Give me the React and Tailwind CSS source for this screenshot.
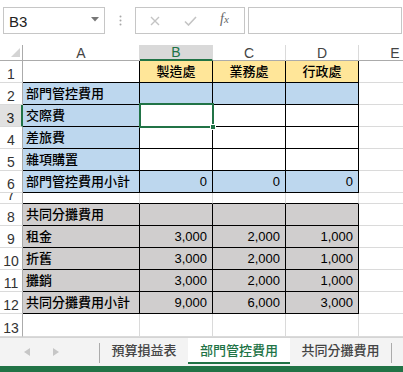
import React from 'react';

const COLS = ['w-[117px]', 'w-[73px]', 'w-[73px]', 'w-[73px]', 'w-[73px]'];

function Cell({ w, bg = 'bg-white', r = 'g', b = 'g', align = 'left', children, sel }) {
  const cls = [
    'relative shrink-0 flex items-center border-r border-b text-[13px] text-black',
    sel ? 'z-10' : '',
    w,
    bg,
    r === 'k' ? 'border-r-black' : 'border-r-[#dadada]',
    b === 'k' ? 'border-b-black' : 'border-b-[#dadada]',
    align === 'right' ? 'justify-end pr-[5px]' : align === 'center' ? 'justify-center' : 'pl-[3px]',
  ].join(' ');
  return (
    <div className={cls}>
      <span className="whitespace-nowrap leading-none font-medium">{children}</span>
      {sel && (
        <>
          <div className="absolute left-[-1px] top-[-2px] right-[-2px] bottom-[-2px] border-2 border-[#217346] pointer-events-none z-10" />
          <div className="absolute right-[-4px] bottom-[-4px] w-[6px] h-[6px] bg-[#217346] border border-white z-20" />
        </>
      )}
    </div>
  );
}

function RowHead({ num, sel }) {
  return (
    <div
      className={[
        'w-[23px] shrink-0 flex justify-center items-end overflow-hidden border-b border-b-[#dadada] text-[14px]',
        sel ? 'bg-[#e1e1e1] border-r-2 border-r-[#217346] text-[#222]' : 'bg-white border-r border-r-[#ababab] text-[#333]',
      ].join(' ')}
    >
      <span className="leading-[13px] pb-[1px]">{num}</span>
    </div>
  );
}

function Row({ num, h, cells, sel }) {
  return (
    <div className={`flex shrink-0 ${h} ${sel ? 'relative z-10' : ''}`}>
      <RowHead num={num} sel={sel} />
      {cells.map((c, i) => (
        <Cell key={i} w={COLS[i]} {...c} />
      ))}
      <div className="w-[40px] shrink-0 border-r border-b border-[#dadada]" />
    </div>
  );
}

const BLUE = 'bg-[#bdd7ee]';
const YEL = 'bg-[#ffe699]';
const GRY = 'bg-[#d0cece]';
const E = { r: 'g', b: 'g' };
const EB = { r: 'g', b: 'k' };

function blueRow(label, vals, fillBlue) {
  return [
    { bg: BLUE, r: 'k', b: 'k', children: label },
    ...vals.map((v) => ({ bg: fillBlue ? BLUE : 'bg-white', r: 'k', b: 'k', align: 'right', children: v })),
    E,
  ];
}

function grayRow(label, vals) {
  return [
    { bg: GRY, r: 'k', b: 'k', children: label },
    ...vals.map((v) => ({ bg: GRY, r: 'k', b: 'k', align: 'right', children: v })),
    E,
  ];
}

function ColHead({ w, label, sel }) {
  return (
    <div
      className={[
        'shrink-0 flex items-center justify-center text-[14px] border-r border-r-[#dadada]',
        w,
        sel ? 'bg-[#d9d9d9] text-[#217346] border-b-2 border-b-[#217346]' : 'bg-white text-[#444] border-b border-b-[#ababab]',
      ].join(' ')}
    >
      <span className="leading-none">{label}</span>
    </div>
  );
}

function FormulaBar() {
  return (
    <div className="h-[45px] shrink-0 flex items-start pt-[7px] pl-[3px] bg-white">
      <div className="w-[102px] h-[27px] border border-[#c6c6c6] flex items-center justify-between pl-[5px] pr-[5px]">
        <span className="text-[15px] text-[#222] leading-none pt-[2px]">B3</span>
        <svg width="8" height="5" viewBox="0 0 8 5" className="mb-[2px]">
          <polygon points="0,0 8,0 4,4.5" fill="#777" />
        </svg>
      </div>
      <div className="w-[30px] h-[27px] flex items-center justify-center">
        <svg width="3" height="11" viewBox="0 0 3 11">
          <circle cx="1.5" cy="1.5" r="1" fill="#a8a8a8" />
          <circle cx="1.5" cy="5.5" r="1" fill="#a8a8a8" />
          <circle cx="1.5" cy="9.5" r="1" fill="#a8a8a8" />
        </svg>
      </div>
      <div className="w-[110px] h-[27px] border border-[#c6c6c6] flex items-center relative">
        <svg width="10" height="10" viewBox="0 0 10 10" className="absolute left-[14px] top-[8px]">
          <path d="M1 1 L9 9 M9 1 L1 9" stroke="#c4c4c4" strokeWidth="1.4" fill="none" />
        </svg>
        <svg width="13" height="10" viewBox="0 0 13 10" className="absolute left-[48px] top-[8px]">
          <path d="M1 5.5 L4.5 9 L12 1" stroke="#c4c4c4" strokeWidth="1.6" fill="none" />
        </svg>
        <span className="absolute left-[84px] top-[4px] font-['Liberation_Serif',serif] italic text-[#666] text-[14px] leading-none">
          f<span className="text-[11px]">x</span>
        </span>
      </div>
      <div className="ml-[3px] w-[154px] h-[27px] border border-[#c6c6c6]" />
    </div>
  );
}

function TabStrip() {
  return (
    <div className="h-[29px] shrink-0 flex items-start bg-[#f3f3f3] border-t border-t-[#d4d4d4] text-[13px]">
      <div className="w-[99px] h-[26px] flex items-center shrink-0">
        <svg width="6" height="8" viewBox="0 0 6 8" className="ml-[24px] mt-[2px]">
          <polygon points="6,0 6,8 0,4" fill="#c6c6c6" />
        </svg>
        <svg width="6" height="8" viewBox="0 0 6 8" className="ml-[23px] mt-[2px]">
          <polygon points="0,0 0,8 6,4" fill="#c6c6c6" />
        </svg>
      </div>
      <div className="w-px h-[20px] mt-[5px] bg-[#ababab] shrink-0" />
      <div className="w-[88px] h-[26px] flex items-center justify-center text-[#444] shrink-0 font-medium">預算損益表</div>
      <div className="w-[102px] h-[26px] flex items-center justify-center bg-white text-[#217346] border-b-2 border-b-[#217346] shrink-0 pt-[2px] font-medium">
        部門管控費用
      </div>
      <div className="w-[101px] h-[26px] flex items-center justify-center text-[#444] shrink-0 font-medium">共同分攤費用</div>
      <div className="w-px h-[20px] mt-[5px] bg-[#ababab] shrink-0" />
    </div>
  );
}

export default function App() {
  return (
    <div className="w-[403px] h-[372px] overflow-hidden bg-white flex flex-col font-['Liberation_Sans','Noto_Sans_CJK_TC',sans-serif]">
      <FormulaBar />
      <div className="flex flex-col shrink-0 h-[292px] overflow-hidden">
        <div className="flex shrink-0 h-[16px]">
          <div className="w-[23px] shrink-0 bg-white border-r border-b border-[#ababab] flex items-end justify-end pr-[2px] pb-[3px]">
            <svg width="9" height="9" viewBox="0 0 9 9">
              <polygon points="9,0 9,9 0,9" fill="#d4d4d4" />
            </svg>
          </div>
          <ColHead w={COLS[0]} label="A" />
          <ColHead w={COLS[1]} label="B" sel />
          <ColHead w={COLS[2]} label="C" />
          <ColHead w={COLS[3]} label="D" />
          <ColHead w={COLS[4]} label="E" />
          <div className="w-[40px] shrink-0 border-b border-b-[#ababab]" />
        </div>
        <Row
          num="1"
          h="h-[22px]"
          cells={[
            { r: 'k', b: 'k' },
            { bg: YEL, r: 'k', b: 'k', align: 'center', children: '製造處' },
            { bg: YEL, r: 'k', b: 'k', align: 'center', children: '業務處' },
            { bg: YEL, r: 'k', b: 'k', align: 'center', children: '行政處' },
            E,
          ]}
        />
        <Row num="2" h="h-[22px]" cells={blueRow('部門管控費用', ['', '', ''], true)} />
        <Row
          num="3"
          h="h-[22px]"
          sel
          cells={[
            { bg: BLUE, r: 'k', b: 'k', children: '交際費' },
            { r: 'k', b: 'k', sel: true },
            { r: 'k', b: 'k' },
            { r: 'k', b: 'k' },
            E,
          ]}
        />
        <Row num="4" h="h-[22px]" cells={blueRow('差旅費', ['', '', ''], false)} />
        <Row num="5" h="h-[22px]" cells={blueRow('雜項購置', ['', '', ''], false)} />
        <Row num="6" h="h-[22px]" cells={blueRow('部門管控費用小計', ['0', '0', '0'], true)} />
        <Row num="7" h="h-[11px]" cells={[EB, EB, EB, EB, E]} />
        <Row num="8" h="h-[22px]" cells={grayRow('共同分攤費用', ['', '', ''])} />
        <Row num="9" h="h-[22px]" cells={grayRow('租金', ['3,000', '2,000', '1,000'])} />
        <Row num="10" h="h-[22px]" cells={grayRow('折舊', ['3,000', '2,000', '1,000'])} />
        <Row num="11" h="h-[22px]" cells={grayRow('攤銷', ['3,000', '2,000', '1,000'])} />
        <Row num="12" h="h-[22px]" cells={grayRow('共同分攤費用小計', ['9,000', '6,000', '3,000'])} />
        <Row num="13" h="h-[23px]" cells={[E, E, E, E, E]} />
      </div>
      <TabStrip />
      <div className="h-[6px] shrink-0 bg-[#217346]" />
    </div>
  );
}
